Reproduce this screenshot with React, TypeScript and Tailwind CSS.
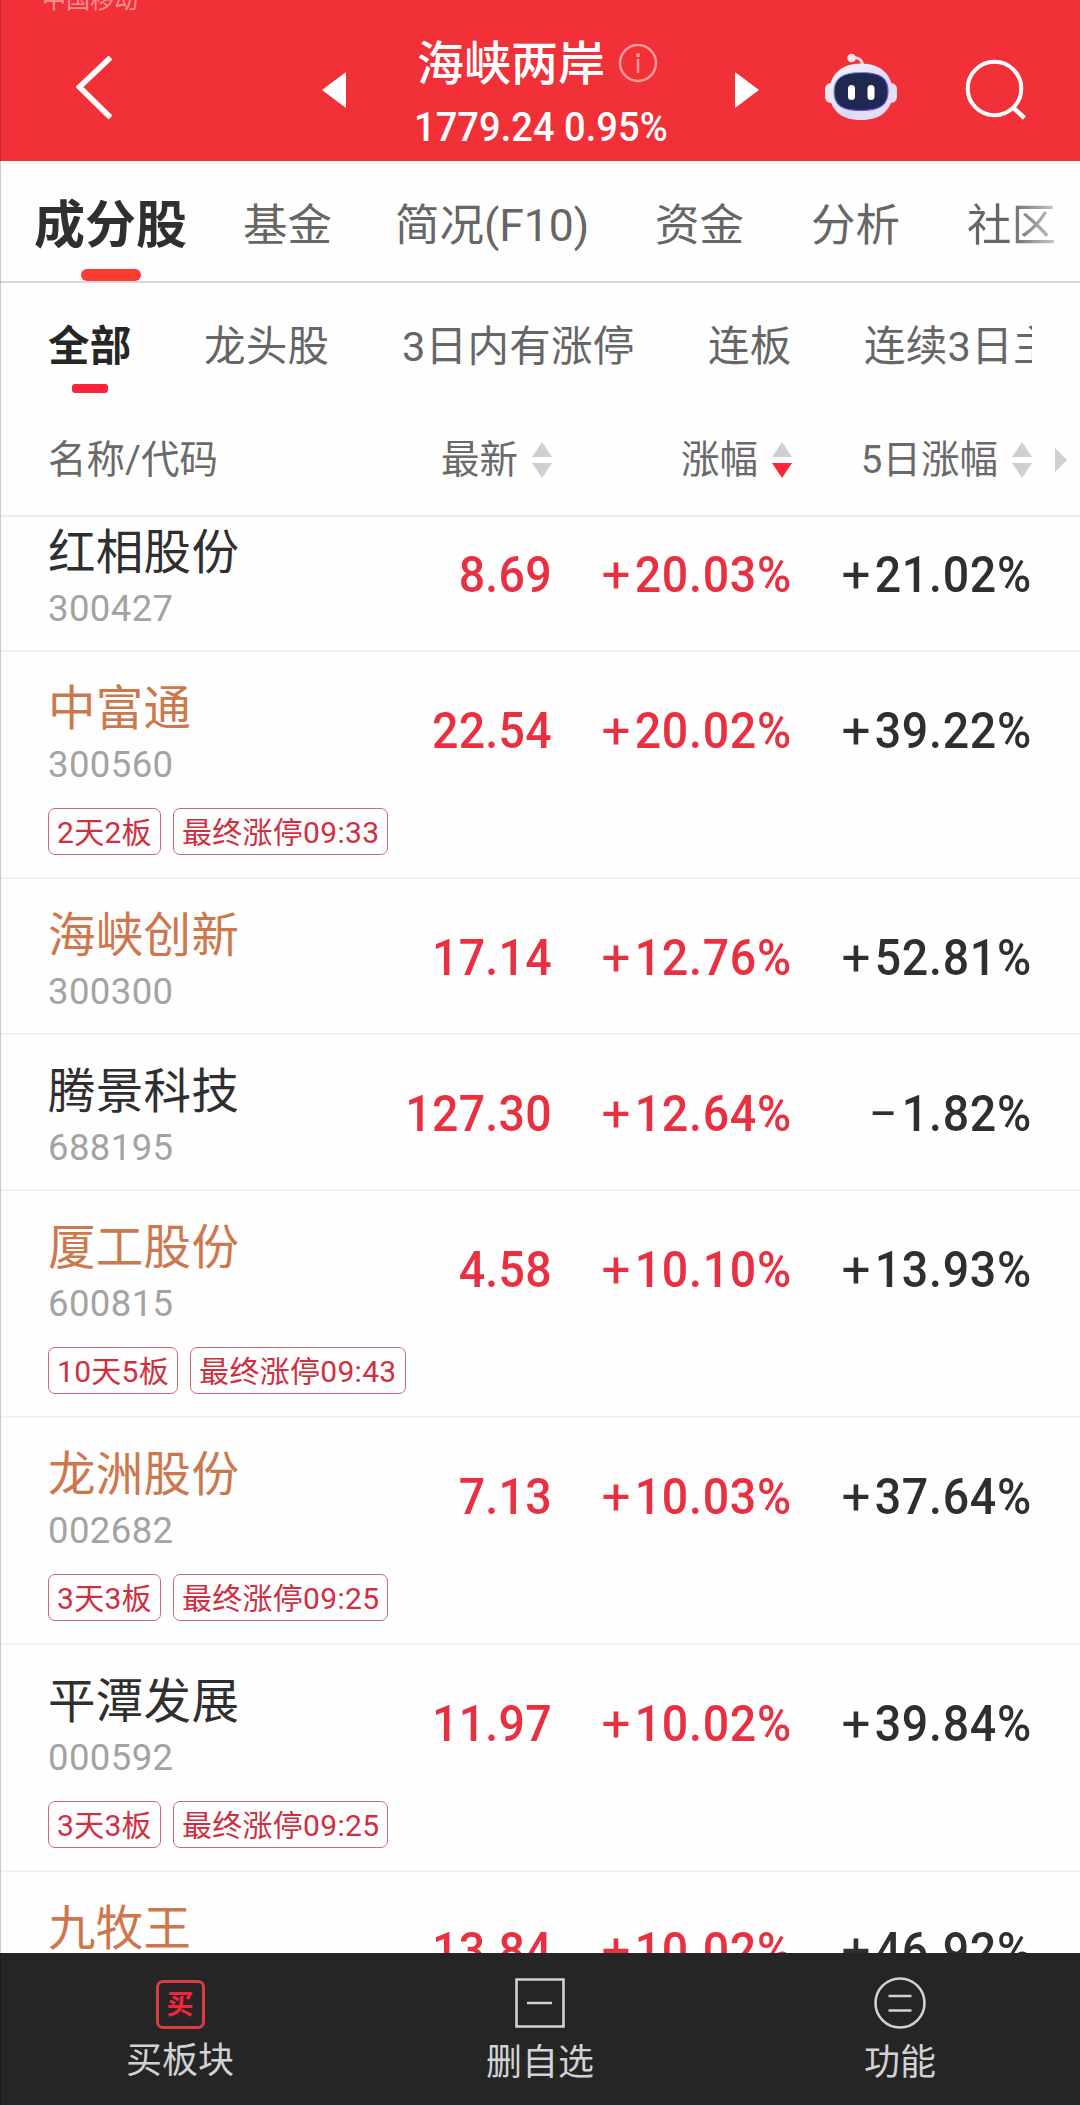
import { useState } from "react";
import clsx from "clsx";

type Stock = {
  name: string;
  code: string;
  price: string;
  change: string;
  fiveDay: string;
  highlight?: boolean;
  tags?: string[];
};

const stocks: Stock[] = [
  { name: "红相股份", code: "300427", price: "8.69", change: "+20.03%", fiveDay: "+21.02%" },
  { name: "中富通", code: "300560", price: "22.54", change: "+20.02%", fiveDay: "+39.22%", highlight: true, tags: ["2天2板", "最终涨停09:33"] },
  { name: "海峡创新", code: "300300", price: "17.14", change: "+12.76%", fiveDay: "+52.81%", highlight: true },
  { name: "腾景科技", code: "688195", price: "127.30", change: "+12.64%", fiveDay: "−1.82%" },
  { name: "厦工股份", code: "600815", price: "4.58", change: "+10.10%", fiveDay: "+13.93%", highlight: true, tags: ["10天5板", "最终涨停09:43"] },
  { name: "龙洲股份", code: "002682", price: "7.13", change: "+10.03%", fiveDay: "+37.64%", highlight: true, tags: ["3天3板", "最终涨停09:25"] },
  { name: "平潭发展", code: "000592", price: "11.97", change: "+10.02%", fiveDay: "+39.84%", tags: ["3天3板", "最终涨停09:25"] },
  { name: "九牧王", code: "601566", price: "13.84", change: "+10.02%", fiveDay: "+46.92%", highlight: true },
];

const tabs = [
  { label: "成分股", width: "w-[209px]" },
  { label: "基金", width: "w-[152px]" },
  { label: "简况(F10)", width: "w-[260px]" },
  { label: "资金", width: "w-[156px]" },
  { label: "分析", width: "w-[156px]" },
  { label: "社区", width: "w-[92px]" },
];

const filters = [
  { label: "全部", width: "w-[156px]" },
  { label: "龙头股", width: "w-[198px]" },
  { label: "3日内有涨停", width: "w-[306px]" },
  { label: "连板", width: "w-[156px]" },
  { label: "连续3日主力", width: "w-[300px]" },
];

function SortIcon({ active = false }: { active?: boolean }) {
  return (
    <svg className="h-9 w-5 shrink-0" viewBox="0 0 20 36">
      <path d="M10 0L20 15H0Z" fill="#cfcfcf" />
      <path d="M0 21H20L10 36Z" fill={active ? "#fb2439" : "#cfcfcf"} />
    </svg>
  );
}

function Robot() {
  return (
    <svg className="h-[68px] w-[72px]" viewBox="0 0 72 68">
      <defs>
        <linearGradient id="shell" x1="0" y1="0" x2="1" y2="1">
          <stop offset="0" stopColor="#fff4f6" />
          <stop offset="0.6" stopColor="#dcdcfb" />
          <stop offset="1" stopColor="#f6dcec" />
        </linearGradient>
        <linearGradient id="rim" x1="0" y1="0" x2="1" y2="1">
          <stop offset="0" stopColor="#8fd6ee" />
          <stop offset="0.5" stopColor="#5a46c8" />
          <stop offset="1" stopColor="#8c5df0" />
        </linearGradient>
      </defs>
      <path d="M27 5C34 4 37.500 7 37.500 13" fill="none" stroke="#fbd5dc" strokeWidth="3" />
      <circle cx="26.500" cy="5" r="4.300" fill="#fde3e8" />
      <rect x="0" y="30" width="14" height="20" rx="6" fill="#f3e4f2" />
      <rect x="58" y="30" width="14" height="20" rx="6" fill="#e6dcf6" />
      <path d="M36 10.500C56 10.500 67.500 22 67.500 39C67.500 57 56 67 36 67C16 67 4.500 57 4.500 39C4.500 22 16 10.500 36 10.500Z" fill="url(#shell)" />
      <path d="M36 19.500C55 19.500 63 25 63 38.500C63 52 55 57.500 36 57.500C17 57.500 9 52 9 38.500C9 25 17 19.500 36 19.500Z" fill="#1f2850" stroke="url(#rim)" strokeWidth="1.200" />
      <rect x="23" y="32" width="7" height="15" rx="3.500" fill="#fff" />
      <rect x="42.500" y="32" width="7" height="15" rx="3.500" fill="#fff" />
    </svg>
  );
}

function Header() {
  return (
    <header className="flex h-[161px] flex-col overflow-hidden bg-[#f23037] text-white">
      <div className="-mt-[13px] h-[26px] shrink-0 pl-[42px] text-[24px] leading-[26px] text-[#ff9094]">中国移动</div>
      <div className="flex h-[148px] shrink-0 items-start">
        <svg className="mt-[43px] ml-[76px] h-[64px] w-[38px]" viewBox="0 0 38 64" fill="none" stroke="#fff" strokeWidth="5.500">
          <path d="M34.500 1.500L3.500 31L34.500 61.500" />
        </svg>
        <svg className="mt-[59px] ml-[208px] h-9 w-6" viewBox="0 0 24 36" fill="#fff">
          <path d="M24 0V36L0 18Z" />
        </svg>
        <div className="ml-[71px] w-[318px] pt-[24px]">
          <div className="flex h-[54px] items-center">
            <h1 className="text-[47px] leading-[54px] font-medium whitespace-nowrap">海峡两岸</h1>
            <svg className="ml-[13px] h-10 w-10" viewBox="0 0 40 40" fill="none" stroke="#ff9a9f" strokeWidth="2.500">
              <circle cx="20" cy="18" r="18" transform="translate(0 1)" />
              <path d="M20 15V29" />
              <path d="M20 9.500V13" strokeWidth="3.500" />
            </svg>
          </div>
          <p className="-ml-[3px] h-[56px] origin-left translate-y-[8px] scale-x-[0.93] text-[41px] leading-[56px] font-medium whitespace-nowrap">
            1779.24 0.95%
          </p>
        </div>
        <svg className="mt-[59px] h-9 w-6" viewBox="0 0 24 36" fill="#fff">
          <path d="M0 0V36L24 18Z" />
        </svg>
        <div className="mt-[40px] ml-[66px]">
          <Robot />
        </div>
        <svg className="mt-[45px] ml-[68px] h-[62px] w-[62px]" viewBox="0 0 62 62" fill="none" stroke="#fff" strokeWidth="4">
          <circle cx="29.500" cy="30.500" r="26.800" />
          <path d="M48 49.500L59.500 60" strokeWidth="4.500" />
        </svg>
      </div>
    </header>
  );
}

function Percent({ value, className }: { value: string; className: string }) {
  return (
    <span className={clsx("flex w-[240px] origin-right scale-x-[0.93] justify-end tracking-[0.8px]", className)}>
      <span className="mr-1 origin-right scale-x-110 font-normal">{value[0]}</span>
      {value.slice(1)}
    </span>
  );
}

function StockRow({ stock }: { stock: Stock }) {
  return (
    <li className={clsx("shrink-0 border-b-2 border-[#f1f1f1] px-12", stock.tags ? "h-[227px]" : "h-[156px]")}>
      <div className="flex h-[156px] items-start">
        <div className="w-[260px] pt-[25px]">
          <p
            className={clsx(
              "h-[64px] text-[47.500px] leading-[64px] tracking-[0.3px] whitespace-nowrap",
              stock.highlight ? "text-[#cd784c]" : "text-[#2f2f2f]",
            )}
          >
            {stock.name}
          </p>
          <p className="h-[48px] text-[36.500px] leading-[48px] tracking-[0.4px] text-[#a3a3a3]">{stock.code}</p>
        </div>
        <div className="flex flex-1 justify-end pt-[49px] text-[50px] leading-[60px] font-medium">
          <span className="w-[245px] origin-right scale-x-[0.93] text-right tracking-[0.3px] text-[#e93040]">{stock.price}</span>
          <Percent value={stock.change} className="text-[#e93040]" />
          <Percent value={stock.fiveDay} className="text-[#2f2f2f]" />
        </div>
      </div>
      {stock.tags && (
        <div className="flex gap-3">
          {stock.tags.map((tag) => (
            <span
              key={tag}
              className="h-[47px] rounded-[7px] border-[1.500px] border-[#cf6873] px-2 text-[30px] leading-[47px] tracking-[0.3px] whitespace-nowrap text-[#d02f41]"
            >
              {tag}
            </span>
          ))}
        </div>
      )}
    </li>
  );
}

export default function App() {
  const [tab, setTab] = useState("成分股");
  const [filter, setFilter] = useState("全部");

  return (
    <div className="relative flex h-[2105px] w-[1080px] flex-col overflow-hidden bg-[#fefefe] font-[Roboto,'Noto_Sans_CJK_SC',sans-serif]">
      <Header />

      <nav className="flex h-[122px] shrink-0 items-start overflow-hidden border-b-2 border-[#d8d8d8] pl-[34px]">
        {tabs.map((item) => (
          <button
            key={item.label}
            type="button"
            onClick={() => setTab(item.label)}
            className={clsx(
              "flex shrink-0 flex-col items-start pt-[33px] whitespace-nowrap",
              item.width,
              tab === item.label ? "text-[51px] font-bold text-[#2f2f2f]" : "text-[44.500px] text-[#666]",
              item.label === "社区" && "overflow-hidden bg-linear-to-r from-[#666] from-45% to-[#d0d0d0] bg-clip-text text-transparent",
            )}
          >
            <span className="h-[64px] leading-[64px]">{item.label}</span>
            {tab === item.label && <span className="mt-[11px] ml-[47px] h-3 w-[60px] rounded-full bg-[#fb3a30]" />}
          </button>
        ))}
      </nav>

      <div className="mr-[48px] flex h-[124px] shrink-0 items-start overflow-hidden pl-12">
        {filters.map((item) => (
          <button
            key={item.label}
            type="button"
            onClick={() => setFilter(item.label)}
            className={clsx(
              "flex shrink-0 flex-col items-start pt-[35px] text-[41.500px] tracking-[0.3px] whitespace-nowrap",
              item.width,
              filter === item.label ? "font-bold text-[#262626]" : "text-[#666]",
            )}
          >
            <span className="h-[58px] leading-[58px]">{item.label}</span>
            {filter === item.label && <span className="mt-2 ml-6 h-[9px] w-9 rounded-[3px] bg-[#fb2439]" />}
          </button>
        ))}
      </div>

      <div className="flex h-[110px] shrink-0 items-start border-b-2 border-[#eee] pt-[25px] pl-12 text-[38.500px] leading-[56px] text-[#6a6a6a]">
        <span className="h-[56px] w-[264px]">名称/代码</span>
        <span className="flex h-[56px] w-[240px] items-center justify-end gap-[14px]">
          最新
          <SortIcon />
        </span>
        <span className="flex h-[56px] w-[240px] items-center justify-end gap-[14px]">
          涨幅
          <SortIcon active />
        </span>
        <span className="flex h-[56px] w-[240px] items-center justify-end gap-[14px]">
          5日涨幅
          <SortIcon />
        </span>
        <svg className="mt-[16px] ml-[23px] h-6 w-3" viewBox="0 0 12 24" fill="#cfcfcf">
          <path d="M0 0L12 12L0 24Z" />
        </svg>
      </div>

      <main className="min-h-0 flex-1 overflow-hidden">
        <ul className="-mt-[21px] flex flex-col">
          {stocks.map((stock) => (
            <StockRow key={stock.code} stock={stock} />
          ))}
        </ul>
      </main>

      <footer className="grid h-[152px] shrink-0 grid-cols-3 bg-[#252525] pt-[24px] text-[36px] leading-[50px] text-[#d2d2d2]">
        <button type="button" className="flex flex-col items-center">
          <span className="mt-[3px] flex h-[49px] w-[49px] items-center justify-center rounded-[7px] border-[3px] border-[#dc3b40] text-[27px] leading-[40px] font-bold text-[#f5243a]">
            买
          </span>
          <span className="mt-[7px] h-[50px]">买板块</span>
        </button>
        <button type="button" className="flex flex-col items-center">
          <svg className="mt-px h-[50px] w-[50px]" viewBox="0 0 50 50" fill="none" stroke="#d2d2d2" strokeWidth="2.600">
            <path d="M1.500 1.500H48.500V48.500H1.500ZM12 25H37" />
          </svg>
          <span className="mt-[10px] h-[50px]">删自选</span>
        </button>
        <button type="button" className="flex flex-col items-center">
          <svg className="h-[52px] w-[52px]" viewBox="0 0 52 52" fill="none" stroke="#d2d2d2" strokeWidth="2.600">
            <circle cx="26" cy="26" r="24.500" />
            <path d="M14.500 19H37.500M14.500 33.500H37.500" />
          </svg>
          <span className="mt-[9px] h-[50px]">功能</span>
        </button>
      </footer>

      <div className="pointer-events-none absolute inset-y-0 left-0 w-px bg-black/20" />
    </div>
  );
}
